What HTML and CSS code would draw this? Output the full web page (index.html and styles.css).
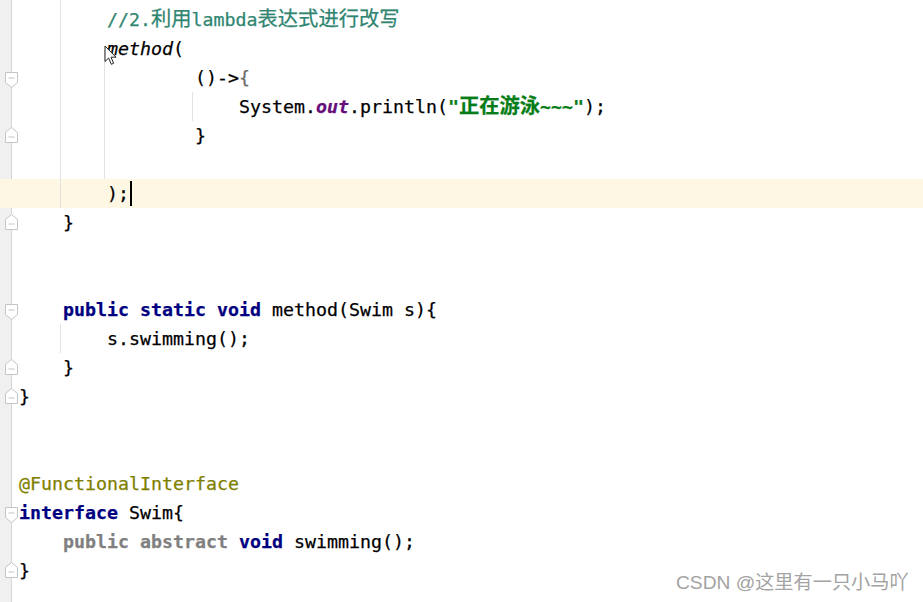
FILE: index.html
```html
<!DOCTYPE html>
<html lang="zh">
<head>
<meta charset="utf-8">
<title>Editor</title>
<link rel="stylesheet" href="styles.css">
</head>
<body>
<div class="editor">
  <div class="line"><div class="gut"></div><div class="code">        <span class="cmt">//2.<span class="cjk">利用</span>lambda<span class="cjk">表达式进行改写</span></span></div></div>
  <div class="line"><div class="gut"></div><div class="code">        <span class="it">method</span>(</div></div>
  <div class="line"><div class="gut"><svg class="fold fold-start" width="13" height="16" viewBox="0 0 13 16"><path d="M0.5 0.5H12.5V10.5L6.5 15.5L0.5 10.5Z" fill="#fff" stroke="#c4c4c4"/><path d="M3.5 6H9.5" stroke="#c4c4c4"/></svg></div><div class="code">                ()-&gt;<span class="brace">{</span></div></div>
  <div class="line"><div class="gut"></div><div class="code">                    System.<span class="field">out</span>.println(<span class="str">"<span class="cjk">正在游泳</span>~~~"</span>);</div></div>
  <div class="line"><div class="gut"><svg class="fold fold-end" width="13" height="16" viewBox="0 0 13 16"><path d="M6.5 0.5L12.5 5.5V15.5H0.5V5.5Z" fill="#fff" stroke="#c4c4c4"/><path d="M3.5 10H9.5" stroke="#c4c4c4"/></svg></div><div class="code">                }</div></div>
  <div class="line"><div class="gut"></div><div class="code"> </div></div>
  <div class="line current"><div class="gut"></div><div class="code">        );<span class="caret"></span></div></div>
  <div class="line"><div class="gut"><svg class="fold fold-end" width="13" height="16" viewBox="0 0 13 16"><path d="M6.5 0.5L12.5 5.5V15.5H0.5V5.5Z" fill="#fff" stroke="#c4c4c4"/><path d="M3.5 10H9.5" stroke="#c4c4c4"/></svg></div><div class="code">    }</div></div>
  <div class="line"><div class="gut"></div><div class="code"> </div></div>
  <div class="line"><div class="gut"></div><div class="code"> </div></div>
  <div class="line"><div class="gut"><svg class="fold fold-start" width="13" height="16" viewBox="0 0 13 16"><path d="M0.5 0.5H12.5V10.5L6.5 15.5L0.5 10.5Z" fill="#fff" stroke="#c4c4c4"/><path d="M3.5 6H9.5" stroke="#c4c4c4"/></svg></div><div class="code">    <span class="kw">public</span> <span class="kw">static</span> <span class="kw">void</span> method(Swim s){</div></div>
  <div class="line"><div class="gut"></div><div class="code">        s.swimming();</div></div>
  <div class="line"><div class="gut"><svg class="fold fold-end" width="13" height="16" viewBox="0 0 13 16"><path d="M6.5 0.5L12.5 5.5V15.5H0.5V5.5Z" fill="#fff" stroke="#c4c4c4"/><path d="M3.5 10H9.5" stroke="#c4c4c4"/></svg></div><div class="code">    }</div></div>
  <div class="line"><div class="gut"><svg class="fold fold-end" width="13" height="16" viewBox="0 0 13 16"><path d="M6.5 0.5L12.5 5.5V15.5H0.5V5.5Z" fill="#fff" stroke="#c4c4c4"/><path d="M3.5 10H9.5" stroke="#c4c4c4"/></svg></div><div class="code">}</div></div>
  <div class="line"><div class="gut"></div><div class="code"> </div></div>
  <div class="line"><div class="gut"></div><div class="code"> </div></div>
  <div class="line"><div class="gut"></div><div class="code"><span class="ann">@FunctionalInterface</span></div></div>
  <div class="line"><div class="gut"><svg class="fold fold-start" width="13" height="16" viewBox="0 0 13 16"><path d="M0.5 0.5H12.5V10.5L6.5 15.5L0.5 10.5Z" fill="#fff" stroke="#c4c4c4"/><path d="M3.5 6H9.5" stroke="#c4c4c4"/></svg></div><div class="code"><span class="kw">interface</span> Swim{</div></div>
  <div class="line"><div class="gut"></div><div class="code">    <span class="mod">public</span> <span class="mod">abstract</span> <span class="kw">void</span> swimming();</div></div>
  <div class="line"><div class="gut"><svg class="fold fold-end" width="13" height="16" viewBox="0 0 13 16"><path d="M6.5 0.5L12.5 5.5V15.5H0.5V5.5Z" fill="#fff" stroke="#c4c4c4"/><path d="M3.5 10H9.5" stroke="#c4c4c4"/></svg></div><div class="code">}</div></div>

  <div class="guide g1"></div>
  <div class="guide g2"></div>
  <div class="guide g3"></div>
  <div class="guide g4"></div>

  <svg class="pointer" width="14" height="21" viewBox="0 0 14 21"><path d="M1 1V16.5L4.6 13L7.3 19.3L9.6 18.3L7 12.2H12Z" fill="#fff" stroke="#222" stroke-width="1" stroke-linejoin="round"/></svg>

  <div class="watermark">CSDN @这里有一只小马吖</div>
</div>
</body>
</html>
```

FILE: styles.css
```css
html, body {
  margin: 0;
  padding: 0;
  background: #ffffff;
}

.editor {
  position: relative;
  width: 923px;
  height: 602px;
  overflow: hidden;
  padding-top: 5px;
  box-sizing: border-box;
  background: linear-gradient(to right, #f0f0f0 0, #f0f0f0 11px, #d6d6d6 11px, #d6d6d6 12px, #ffffff 12px);
}

.line {
  display: flex;
  height: 29px;
}

.line.current {
  background: #fdf7e3;
}

.gut {
  position: relative;
  width: 12px;
  flex: none;
}

.fold {
  position: absolute;
  left: 5px;
  display: block;
}

.fold-start { top: 9px; }
.fold-end { top: 6px; }

.code {
  flex: 1;
  padding-left: 7px;
  white-space: pre;
  font-family: "DejaVu Sans Mono", "Liberation Mono", monospace;
  font-size: 18.27px;
  line-height: 29px;
  height: 29px;
  color: #000000;
  -webkit-text-stroke: 0.25px currentColor;
}

.cjk {
  font-family: "Noto Sans CJK SC", sans-serif;
  font-size: 20.3px;
  line-height: 1;
}

.cmt { color: #2f8571; }
.cmt .cjk { font-weight: 400; }
.it { font-style: italic; }
.kw { color: #000080; font-weight: bold; }
.mod { color: #808080; font-weight: bold; }
.ann { color: #808000; }
.field { color: #660e7a; font-style: italic; font-weight: bold; }
.str { color: #067d17; font-weight: bold; }
.str .cjk { font-weight: 700; }
.brace { color: #6b6b6b; }

.caret {
  display: inline-block;
  width: 2px;
  height: 25px;
  background: #000;
  margin-left: 1px;
  vertical-align: -6px;
}

.guide {
  position: absolute;
  width: 1px;
  background: #e2e2e2;
}
.g1 { left: 60px; top: 0; height: 208px; }
.g2 { left: 104px; top: 50px; height: 129px; }
.g3 { left: 192px; top: 92px; height: 29px; }
.g4 { left: 60px; top: 324px; height: 29px; }

.pointer {
  position: absolute;
  left: 104px;
  top: 45px;
}

.watermark {
  position: absolute;
  left: 676px;
  top: 570px;
  font-family: "Liberation Sans", "Noto Sans CJK SC", sans-serif;
  font-size: 19.2px;
  line-height: 26px;
  color: #a3a3a3;
  white-space: nowrap;
  text-shadow: 0 0 1px #ffffff;
}
```
